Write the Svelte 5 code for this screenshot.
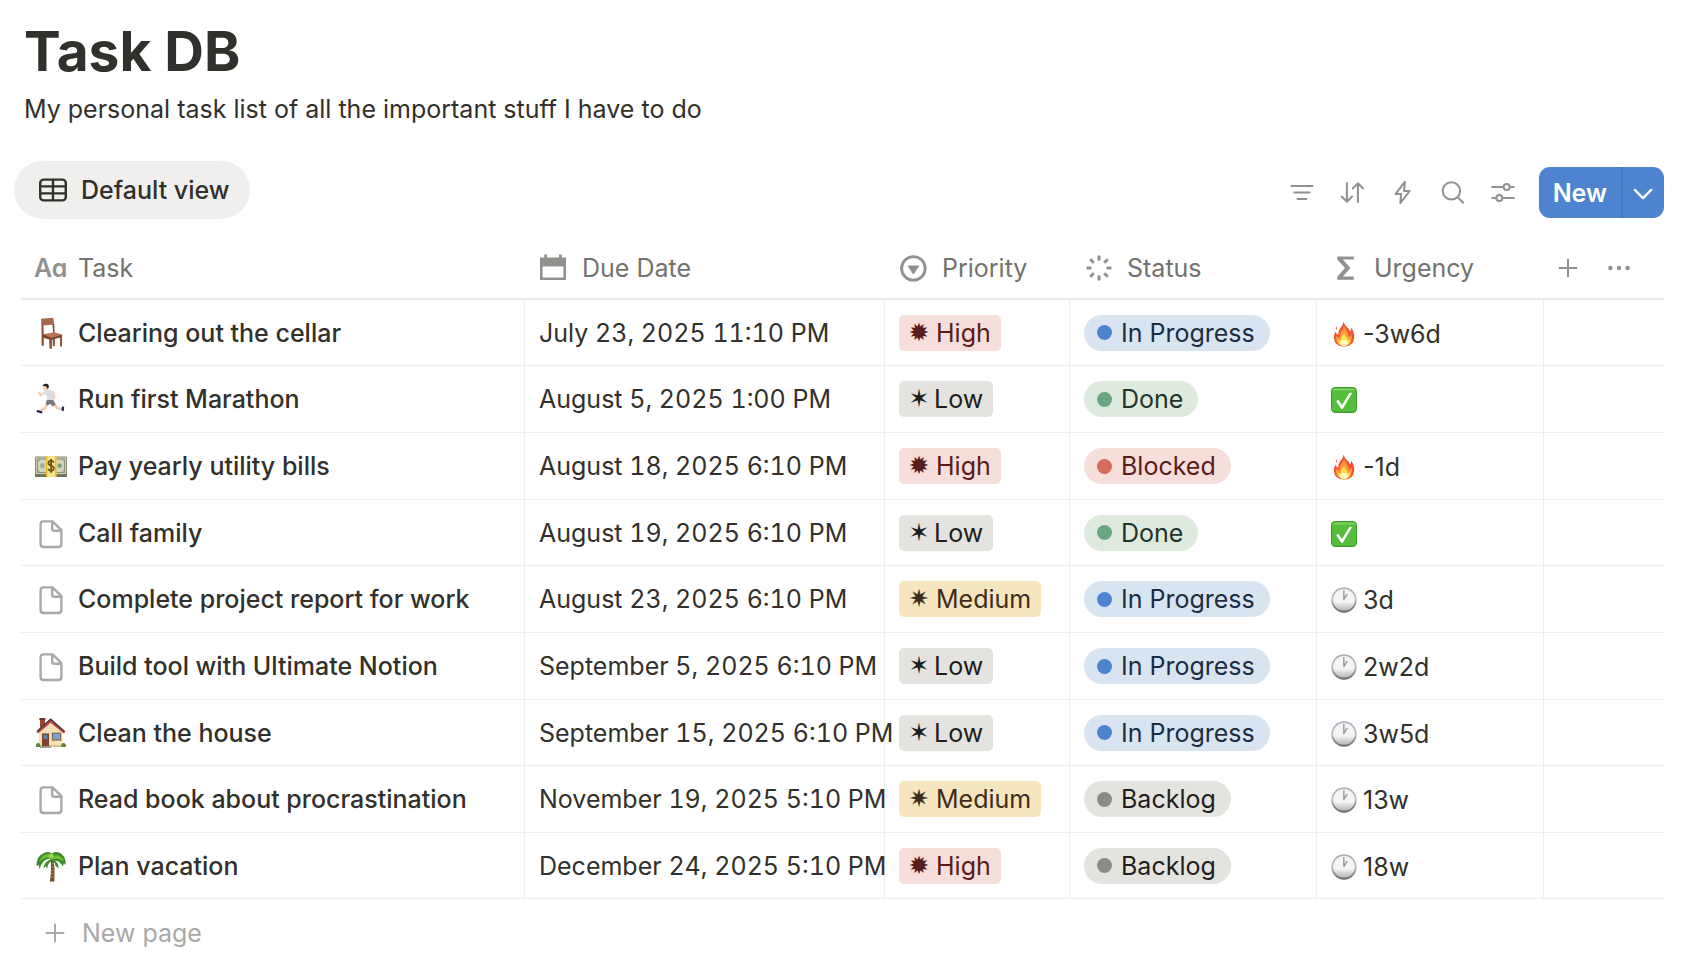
<script>
  // Page data
  const title = 'Task DB';
  const description = 'My personal task list of all the important stuff I have to do';

  const tools = [
    { icon: 'filter', label: 'Filter' },
    { icon: 'sort', label: 'Sort' },
    { icon: 'bolt', label: 'Automations' },
    { icon: 'search', label: 'Search' },
    { icon: 'sliders', label: 'Settings' }
  ];

  const columns = [
    { key: 'task', label: 'Task', icon: 'title' },
    { key: 'due', label: 'Due Date', icon: 'calendar' },
    { key: 'priority', label: 'Priority', icon: 'select' },
    { key: 'status', label: 'Status', icon: 'status' },
    { key: 'urgency', label: 'Urgency', icon: 'sigma' }
  ];

  const priorities = {
    high: { label: 'High', star: '✹' },
    medium: { label: 'Medium', star: '✷' },
    low: { label: 'Low', star: '✶' }
  };

  const statuses = {
    progress: 'In Progress',
    done: 'Done',
    blocked: 'Blocked',
    backlog: 'Backlog'
  };

  const tasks = [
    { icon: 'chair', name: 'Clearing out the cellar', due: 'July 23, 2025 11:10 PM', priority: 'high', status: 'progress', mark: 'fire', left: '-3w6d' },
    { icon: 'runner', name: 'Run first Marathon', due: 'August 5, 2025 1:00 PM', priority: 'low', status: 'done', mark: 'check', left: '' },
    { icon: 'money', name: 'Pay yearly utility bills', due: 'August 18, 2025 6:10 PM', priority: 'high', status: 'blocked', mark: 'fire', left: '-1d' },
    { icon: 'page', name: 'Call family', due: 'August 19, 2025 6:10 PM', priority: 'low', status: 'done', mark: 'check', left: '' },
    { icon: 'page', name: 'Complete project report for work', due: 'August 23, 2025 6:10 PM', priority: 'medium', status: 'progress', mark: 'clock', left: '3d' },
    { icon: 'page', name: 'Build tool with Ultimate Notion', due: 'September 5, 2025 6:10 PM', priority: 'low', status: 'progress', mark: 'clock', left: '2w2d' },
    { icon: 'house', name: 'Clean the house', due: 'September 15, 2025 6:10 PM', priority: 'low', status: 'progress', mark: 'clock', left: '3w5d' },
    { icon: 'page', name: 'Read book about procrastination', due: 'November 19, 2025 5:10 PM', priority: 'medium', status: 'backlog', mark: 'clock', left: '13w' },
    { icon: 'palm', name: 'Plan vacation', due: 'December 24, 2025 5:10 PM', priority: 'high', status: 'backlog', mark: 'clock', left: '18w' }
  ];
</script>

<!-- Line icons, drawn in the current text colour -->
{#snippet lineIcon(name)}
  <svg class="line-icon" viewBox="0 0 28 28" aria-hidden="true">
    {#if name === 'table'}
      <rect class="medium-line" x="1.2" y="3.6" width="25.6" height="20.8" rx="3.5" />
      <path class="medium-line" d="M1.2 10.4H26.8M1.2 17.4H26.8M14 4V24" />
    {:else if name === 'filter'}
      <path d="M2.4 7H23.6M5.4 13.5H20.6M8.6 20H17.4" />
    {:else if name === 'sort'}
      <path d="M7.9 4V22.5M2.7 17.5L7.9 22.7L13.1 17.5M18.9 23V4.5M13.7 9.5L18.9 4.3L24.1 9.5" />
    {:else if name === 'bolt'}
      <path d="M15.9 2.9L6.6 14.9H12.1L11.3 24.1L20.7 12H15.1Z" />
    {:else if name === 'search'}
      <circle cx="12.4" cy="11.9" r="8.7" />
      <path d="M18.7 18.2L24.2 23.7" />
    {:else if name === 'sliders'}
      <path d="M3.2 8.1H14.6M20.8 8.1H24.8M3.2 18.9H7.2M13.4 18.9H24.8" />
      <circle cx="17.7" cy="8.1" r="3" />
      <circle cx="10.3" cy="18.9" r="3" />
    {:else if name === 'chevron'}
      <path class="medium-line" d="M5.8 10.9L14 19.1L22.2 10.9" />
    {:else if name === 'plus'}
      <path d="M14 5.5V22.5M5.5 14H22.5" />
    {:else if name === 'dots'}
      <g class="solid">
        <circle cx="5.4" cy="14" r="2.2" />
        <circle cx="14" cy="14" r="2.2" />
        <circle cx="22.6" cy="14" r="2.2" />
      </g>
    {:else if name === 'calendar'}
      <path class="solid" fill-rule="evenodd" d="M1 3.4H5.2V.6H8V3.4H20V.6H22.8V3.4H27V26H1ZM3.6 12.4V23.6H24.4V12.4Z" />
    {:else if name === 'select'}
      <circle class="thick" cx="14.4" cy="14.4" r="11.8" />
      <path class="solid" d="M9.4 11.4H19.4Q20.4 11.4 19.8 12.5L15.2 19.4Q14.4 20.6 13.6 19.4L9 12.5Q8.4 11.4 9.4 11.4Z" />
    {:else if name === 'status'}
      <path class="spokes" d="M15 1.5V6.5M15 21.5V26.5M2.5 14H7.5M22.5 14H27.5M6.2 5.2L9.7 8.7M20.3 19.3L23.8 22.8M23.8 5.2L20.3 8.7M9.7 19.3L6.2 22.8" />
    {:else if name === 'sigma'}
      <path class="solid" d="M6.2 2.4H22.8V5.6H11.8L19.4 14L11.8 22.6H22.8V25.8H6.2V22.8L14 14L6.2 5.4Z" />
    {:else if name === 'page'}
      <path class="medium-line" d="M7 2.4H15.6L24.4 11.2V25Q24.4 28 21.4 28H6.6Q3.6 28 3.6 25V5.4Q3.6 2.4 6.6 2.4M15.2 2.6V9.8Q15.2 11.8 17.2 11.8H24.2" />
    {/if}
  </svg>
{/snippet}

<!-- Coloured pictures of the pages and the urgency marks -->
{#snippet picture(name)}
  <svg class="picture" viewBox="0 0 32 32" aria-hidden="true">
    {#if name === 'chair'}
      <path fill="#8c4f35" d="M6.4 2L8.2 1.8L8.8 18H20L19.8 29H17.8V20H17L16.8 31.4H14.6L14.2 22.4L8.8 21V28.8H6.6Z" />
      <path fill="#a9674a" d="M6.4 1.8L18.2 .8L19.2 7.6L7.2 8.6Z" />
      <path fill="#8c4f35" d="M17.4 7H19.2L19.8 16.5H18.2Z" />
      <path fill="#b87352" d="M8 17.2L19.4 15.2L27 17.6L15.8 21Z" />
      <path fill="#7c432c" d="M8 17.2L15.8 21L27 17.6V20L16 23L8 19.6Z" />
      <path fill="#9a5a3c" d="M24.8 19.8H27.2L27 29.4H25ZM14.4 22.6H17.2L16.9 31.6H14.8Z" />
    {:else if name === 'runner'}
      <path fill="none" stroke="#f3d3bd" stroke-width="2.4" stroke-linecap="round" stroke-linejoin="round" d="M11 8.6L5.6 12.4L4.2 9.8M18.4 9.4L19.4 15L16 17" />
      <path fill="none" stroke="#f0cdb6" stroke-width="2.6" stroke-linecap="round" stroke-linejoin="round" d="M12.6 20.4L9.6 25.6L4.6 28M18.4 20.4L22.4 25.2L27.6 26" />
      <path fill="#dcdde0" d="M9.6 7.4Q14.4 5.2 18.4 8.4L18 18H11.8Q12.4 13 9.6 10.4Z" />
      <path fill="#77787d" d="M11.8 17H18.2L20.8 21.4L17.8 23.4L15.2 20.8L12.6 22.6L10.6 20.8Z" />
      <circle fill="#f5d6c0" cx="10.6" cy="4.6" r="3" />
      <path fill="#26211f" d="M7.4 2.8Q8.8 .2 11.8 .8Q14.4 1.6 13.6 5L12.4 6L11.4 3.6Z" />
      <path fill="#1c2258" d="M2 27L7.6 28.4L6.8 30.4L1.6 29ZM27 23.4L29.2 23.8L28.6 28.6L26.4 27.2Z" />
    {:else if name === 'money'}
      <rect fill="#8a8e78" x="0" y="6.6" width="32" height="20.4" rx="1" />
      <rect fill="#d3d5bd" x="1" y="7.6" width="30" height="16.4" />
      <path fill="none" stroke="#82876c" stroke-width=".9" d="M2.4 9H29.6V22.6H2.4ZM2.4 12L5.4 9M29.6 12L26.6 9M2.4 19.6L5.4 22.6M29.6 19.6L26.6 22.6" />
      <ellipse fill="#a7ac91" cx="7.4" cy="15.8" rx="2.2" ry="2.8" />
      <circle fill="#6fa58b" cx="24.6" cy="15.8" r="2.2" />
      <path fill="#6c705e" d="M0 24.4H32V27H0Z" />
      <rect fill="#f7e38c" x="11" y="6.2" width="10.4" height="21" />
      <path fill="#e6be2e" d="M11 6.2H12.4V27.2H11ZM20 6.2H21.4V27.2H20Z" />
      <path fill="none" stroke="#6d5413" stroke-width="1.8" d="M18.8 12.6Q18 10.8 16 10.8Q13.4 10.8 13.4 13Q13.4 15 16 15.6Q18.8 16.4 18.8 18.6Q18.8 20.8 16 20.8Q13.8 20.8 13.2 18.8M16.1 9V22.8" />
    {:else if name === 'house'}
      <rect fill="#a1452f" x="5" y="1.6" width="5" height="9" />
      <rect fill="#6d3328" x="4.4" y="1" width="6" height="2" />
      <path fill="#f4dfb8" d="M4 14.5L15.6 4.4L27.6 14.5V29.4H4Z" />
      <path fill="#dcc394" d="M4 28H27.6V30H4Z" />
      <path fill="#c9423a" d="M1.4 14.4L15.6 1.8L30.4 14.4L28.8 16.4L15.6 5.8L3 16.4Z" />
      <path fill="none" stroke="#3d3b45" stroke-width="1.3" d="M2.4 14.2L15.6 2.2L29.2 14.2" />
      <rect fill="#7b442c" x="7" y="16.4" width="7" height="13" />
      <rect fill="#5c86ad" x="8.6" y="17.8" width="3.8" height="4.2" />
      <rect fill="#8d6a46" x="16.8" y="15.6" width="9.4" height="8" />
      <rect fill="#6da5d6" x="18" y="16.8" width="7" height="5.6" />
      <path fill="#5c8b38" d="M.8 29.4Q.8 25.6 3.4 26Q5.8 26.6 5.4 30H1ZM26 30Q26 26 28.6 26Q31.2 26.4 31.2 29.6L30 30Z" />
      <path fill="#9a9a96" d="M5.6 29.2H15.4L16.4 31H5Z" />
    {:else if name === 'palm'}
      <path fill="#73502c" d="M15.6 9.4L18.6 10Q20.2 20 19.4 31.4H14.8Q16.8 21 15.6 9.4Z" />
      <path fill="none" stroke="#b28d55" stroke-width="1" d="M16.6 14L18.8 13M16.8 17.4L19.4 16.4M16.6 20.8L19.6 19.8M16.2 24.2L19.6 23.2M15.8 27.6L19.4 26.6" />
      <path fill="#3c8b2c" d="M16 9Q8 7.6 4.6 19.2L3.6 15L1.6 16.2Q1.2 6 9 3Q13 1 17 3.4Q22 .2 27 4.4Q31.2 8 30.6 15L28.8 13.2L28 16.6Q25 11 20 10.4Q24 14 23.6 18.6L20.4 15.8Q19.8 11.8 16.8 10.6Q13 13 12.2 18.4L10.4 16.2L8.4 18.6Q9 12 16 9Z" />
      <path fill="#6fbd3b" d="M15.6 8Q9.6 6 4 12.4Q6.4 4.4 13 4.2Q17 4.6 17.2 8Q19 3.6 24 5.4Q28.4 7.6 28.8 12.2Q24.6 7.8 18.6 9Z" />
      <circle fill="#93d552" cx="16" cy="6" r="2.6" />
    {:else if name === 'fire'}
      <path fill="#ef5330" d="M15.4 .8Q16.4 4.8 20.4 8.4Q22.4 10.2 23.2 12.8Q25.2 12 24.8 8.4Q29 13.6 28.6 20.6Q27.6 31.2 16 31.4Q4.4 31 3.6 20.8Q3.4 16.2 5.8 12.8Q6.4 15.8 8.8 16.8Q8.2 12.6 11.4 9Q14.8 5.2 15.4 .8Z" />
      <path fill="#ff9838" d="M16.2 6.2Q17.4 9.8 20.2 13.4Q22.2 17 21.6 19.4Q24.6 18.8 25.4 16.2Q27 21.4 24.6 26Q21.8 30.6 16 30.6Q8.4 30.6 6.4 24.4Q5.2 20.8 6.8 18.2Q9 20.8 11 19.8Q9.6 15.4 13.2 11.6Q15.6 9 16.2 6.2Z" />
      <path fill="#ffe04e" d="M16.2 14.6Q16.8 18.2 19.4 20.6Q20.8 22.2 20.4 23.8Q22.4 23.4 23.2 21.8Q24.4 30.2 16 30.8Q8.2 30.4 8.6 22.4Q10.2 24.4 12.4 23.6Q11.2 19.8 14.2 17.4Q15.8 16 16.2 14.6Z" />
      <ellipse fill="#fffac0" cx="16" cy="26.8" rx="4.6" ry="3.6" />
      <path fill="#ef5330" d="M6.6 6.6Q8.4 9 6.4 11.2Q4.8 9.4 6.6 6.6Z" />
    {:else if name === 'check'}
      <rect fill="#3b9b2a" width="32" height="32" rx="5.5" />
      <rect fill="#55bd3c" x="1.2" y="1.6" width="29.6" height="29" rx="4.6" />
      <path fill="#7fd465" d="M5 1.8H27Q29.6 2 30 4.2H2Q2.4 2 5 1.8Z" />
      <path fill="#fff" d="M6.4 17.6L9 15.6L13.6 22L22.8 7L26 7.4L14.4 27H12.8Z" />
    {:else if name === 'clock'}
      <defs>
        <linearGradient id="clock-rim" x1="0" y1="0" x2="0" y2="1">
          <stop offset="0" stop-color="#a7b1c0" />
          <stop offset=".5" stop-color="#bcbcbc" />
          <stop offset="1" stop-color="#666" />
        </linearGradient>
        <linearGradient id="clock-face" x1="0" y1="0" x2="0" y2="1">
          <stop offset="0" stop-color="#f4f4f4" />
          <stop offset=".6" stop-color="#f4f4f4" />
          <stop offset="1" stop-color="#b4b4b4" />
        </linearGradient>
      </defs>
      <circle fill="url(#clock-rim)" cx="16" cy="16" r="15.6" />
      <circle fill="url(#clock-face)" cx="16" cy="15.8" r="13.4" />
      <path fill="none" stroke="#9c9c9c" stroke-width="1.8" stroke-linecap="round" d="M15.8 15.4V4.4M15.8 15.4L19.6 9.2" />
    {/if}
  </svg>
{/snippet}

<main class="page">
  <header class="page-header">
    <h1>{title}</h1>
    <p>{description}</p>
  </header>

  <div class="toolbar">
    <button class="view-tab" type="button">
      {@render lineIcon('table')}
      Default view
    </button>

    <div class="tools">
      {#each tools as tool}
        <button class="tool" type="button" aria-label={tool.label}>
          {@render lineIcon(tool.icon)}
        </button>
      {/each}
      <div class="new-group">
        <button class="new-button" type="button">New</button>
        <button class="new-menu" type="button" aria-label="More templates">
          {@render lineIcon('chevron')}
        </button>
      </div>
    </div>
  </div>

  <div class="database">
    <table>
      <colgroup>
        {#each columns as column}
          <col class="col-{column.key}" />
        {/each}
        <col class="col-actions" />
      </colgroup>
      <thead>
        <tr>
          {#each columns as column}
            <th scope="col">
              <div class="heading">
                {#if column.icon === 'title'}
                  <span class="title-icon" aria-hidden="true">Aa</span>
                {:else}
                  {@render lineIcon(column.icon)}
                {/if}
                <span>{column.label}</span>
              </div>
            </th>
          {/each}
          <th>
            <div class="column-actions">
              <button class="tool" type="button" aria-label="Add property">
                {@render lineIcon('plus')}
              </button>
              <button class="tool" type="button" aria-label="More">
                {@render lineIcon('dots')}
              </button>
            </div>
          </th>
        </tr>
      </thead>
      <tbody>
        {#each tasks as task}
          <tr>
            <td>
              <div class="task">
                {#if task.icon === 'page'}
                  {@render lineIcon('page')}
                {:else}
                  {@render picture(task.icon)}
                {/if}
                <span>{task.name}</span>
              </div>
            </td>
            <td class="due">{task.due}</td>
            <td>
              <span class="tag {task.priority}">
                <span class="star">{priorities[task.priority].star}</span>
                {priorities[task.priority].label}
              </span>
            </td>
            <td>
              <span class="status {task.status}">
                <span class="dot"></span>
                {statuses[task.status]}
              </span>
            </td>
            <td>
              <div class="urgency-value">
                {@render picture(task.mark)}
                {task.left}
              </div>
            </td>
            <td></td>
          </tr>
        {/each}
      </tbody>
    </table>

    <button class="new-page" type="button">
      {@render lineIcon('plus')}
      New page
    </button>
  </div>
</main>

<style>
  :global(body) {
    background: #fff;
  }

  .page {
    box-sizing: border-box;
    padding: 16px 28px 32px 14px;
    font-family: Inter, 'Liberation Sans', sans-serif;
    font-size: 25px;
    line-height: 32px;
    color: #32302c;
  }

  button {
    margin: 0;
    padding: 0;
    border: 0;
    background: none;
    font: inherit;
    color: inherit;
    cursor: pointer;
  }

  .page-header {
    padding-left: 10px;
  }

  h1 {
    margin: 0;
    font-size: 55px;
    line-height: 70px;
    font-weight: 700;
  }

  p {
    margin: 7px 0 0;
  }

  /* Icons */
  .line-icon {
    display: block;
    flex: none;
    width: 28px;
    height: 28px;
    fill: none;
    stroke: currentColor;
    stroke-width: 2;
    stroke-linecap: round;
    stroke-linejoin: round;
    overflow: visible;
  }

  .thick {
    stroke-width: 2.8;
  }

  .medium-line {
    stroke-width: 2.4;
  }

  .solid {
    fill: currentColor;
    stroke: none;
  }

  .spokes {
    stroke-width: 3;
    stroke-linecap: butt;
  }

  .picture {
    display: block;
    flex: none;
    width: 32px;
    height: 32px;
  }

  /* Toolbar */
  .toolbar {
    display: flex;
    justify-content: space-between;
    align-items: flex-end;
    margin-top: 36px;
  }

  .view-tab {
    display: flex;
    align-items: center;
    gap: 14px;
    height: 58px;
    padding: 0 20px 0 25px;
    border-radius: 29px;
    background: #f0efed;
    font-weight: 500;
  }

  .tools {
    display: flex;
    align-items: center;
    gap: 22px;
    margin-bottom: 1px;
  }

  .tool {
    color: #91918e;
  }

  .new-group {
    display: flex;
    height: 51px;
    border-radius: 11px;
    overflow: hidden;
    background: #4d83cf;
    color: #fff;
  }

  .new-button {
    padding: 0 14px;
    border-right: 2px solid #4676bd;
    font-weight: 600;
  }

  .new-menu {
    display: flex;
    align-items: center;
    justify-content: center;
    width: 41px;
    padding-right: 2px;
  }

  /* Table */
  .database {
    margin-top: 18px;
    padding-left: 7px;
  }

  table {
    width: 100%;
    table-layout: fixed;
    border-spacing: 0;
  }

  .col-due {
    width: 360px;
  }

  .col-priority {
    width: 185px;
  }

  .col-status {
    width: 247px;
  }

  .col-urgency {
    width: 227px;
  }

  .col-actions {
    width: 120px;
  }

  th,
  td {
    box-sizing: border-box;
    padding: 0 14px;
    text-align: left;
    vertical-align: middle;
    white-space: nowrap;
  }

  th {
    height: 63px;
    border-bottom: 2px solid #e9e9e7;
    font-weight: 400;
    color: #73726e;
  }

  th:first-child {
    padding-left: 13px;
  }

  th:last-child {
    padding: 0 10px;
  }

  td {
    height: 67px;
    border-right: 1px solid #eeeeec;
    border-bottom: 1px solid #eeeeec;
  }

  tr:nth-child(3n + 1) td,
  tr:last-child td {
    height: 66px;
  }

  td:last-child {
    border-right: 0;
  }

  .due {
    font-variant-numeric: tabular-nums;
  }

  .heading {
    display: flex;
    align-items: center;
    gap: 15px;
  }

  .heading .line-icon,
  .title-icon {
    color: #91918e;
  }

  /* Single-storey a, as in the text property mark */
  .title-icon {
    width: 29px;
    font-weight: 600;
    font-feature-settings: 'cv11';
  }

  .column-actions {
    display: flex;
    gap: 23px;
  }

  .task {
    display: flex;
    align-items: center;
    gap: 11px;
    font-weight: 500;
  }

  .task .line-icon {
    width: 32px;
    color: #a9a9a7;
  }

  .tag,
  .status {
    display: inline-flex;
    align-items: center;
    height: 36px;
    vertical-align: middle;
  }

  .tag {
    gap: 7px;
    padding: 0 10px;
    border-radius: 5px;
  }

  .star {
    display: flex;
    justify-content: center;
    width: 20px;
    font-family: 'DejaVu Sans', sans-serif;
    font-size: 25px;
  }

  .tag.high {
    background: #f6deda;
    color: #5a1c18;
  }

  .tag.medium {
    background: #f5e6bf;
    color: #402c1b;
  }

  .tag.low {
    gap: 5px;
    background: #e4e3df;
    color: #1f1e1a;
  }

  .status {
    gap: 9px;
    padding: 0 15px 0 13px;
    border-radius: 18px;
  }

  .dot {
    width: 15px;
    height: 15px;
    border-radius: 50%;
  }

  .status.progress {
    background: #d8e5f1;
    color: #1b2d44;
  }

  .progress .dot {
    background: #4d83cf;
  }

  .status.done {
    background: #deeade;
    color: #20352a;
  }

  .done .dot {
    background: #6aa682;
  }

  .status.blocked {
    background: #f6deda;
    color: #5a1c18;
  }

  .blocked .dot {
    background: #d66a5d;
  }

  .status.backlog {
    background: #e4e3df;
    color: #1f1e1a;
  }

  .backlog .dot {
    background: #8c8b86;
  }

  .urgency-value {
    display: flex;
    align-items: center;
    gap: 6px;
    padding-top: 2px;
  }

  .urgency-value .picture {
    width: 26px;
    height: 26px;
  }

  .new-page {
    display: flex;
    align-items: center;
    gap: 13px;
    width: 100%;
    height: 67px;
    padding: 0 20px;
    color: #a9a9a7;
  }
</style>
